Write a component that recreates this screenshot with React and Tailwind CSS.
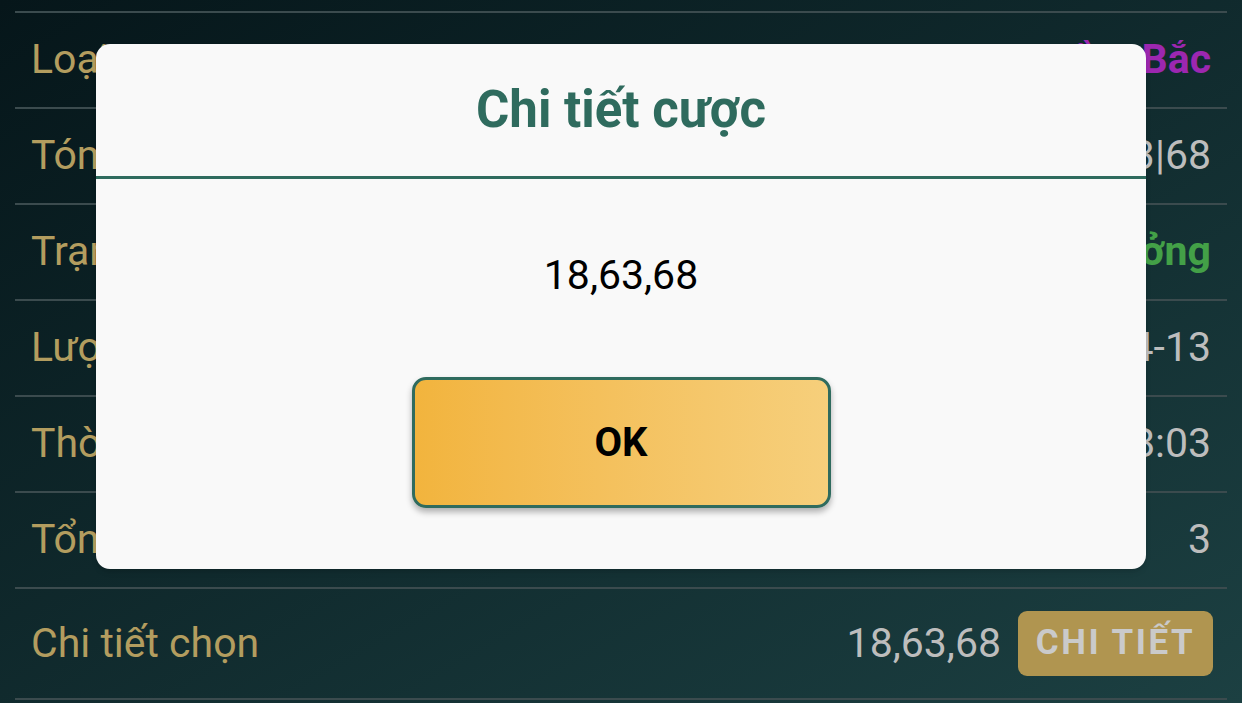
import React from 'react';

const rows = [
  { label: 'Loại', value: 'Miền Bắc', tone: 'purple' },
  { label: 'Tóm tắt', value: '18|63|68', tone: 'gray' },
  { label: 'Trạng thái', value: 'Trúng thưởng', tone: 'green' },
  { label: 'Lượt xổ', value: '2024-04-13', tone: 'gray' },
  { label: 'Thời gian', value: '2024-04-13 18:28:03', tone: 'gray' },
  { label: 'Tổng số', value: '3', tone: 'gray' },
];

function valueClass(tone) {
  switch (tone) {
    case 'purple': return 'text-[#9c27b0] font-bold';
    case 'green': return 'text-[#43a047] font-bold';
    default: return 'text-[#bdbdbd]';
  }
}

export default function App() {
  return (
    <div
      className="relative w-[1242px] h-[703px] overflow-hidden bg-gradient-to-br from-[#06161a] to-[#1c4042]"
      style={{ fontFamily: 'Roboto, "Noto Sans", sans-serif' }}
    >
      {/* Detail list */}
      <div className="px-[15px] pt-[11px]">
        {rows.map((r) => (
          <div
            key={r.label}
            className="h-[96px] border-t-2 border-[#3b4b4e] flex items-center justify-between px-4 text-[41px]"
          >
            <span className="text-[#b39d5f]">{r.label}</span>
            <span className={valueClass(r.tone)}>{r.value}</span>
          </div>
        ))}
        <div className="h-[113px] border-t-2 border-b-2 border-[#3b4b4e] flex items-center justify-between pl-4 pr-[14px] text-[41px]">
          <span className="text-[#b39d5f]">Chi tiết chọn</span>
          <div className="flex items-center gap-[17px]">
            <span className="text-[#bdbdbd]">18,63,68</span>
            <button className="h-[65px] w-[195px] rounded-[9px] bg-[#b09550] text-[#cacaca] font-bold text-[35px] tracking-[2.5px]">
              CHI TIẾT
            </button>
          </div>
        </div>
      </div>

      {/* Dialog */}
      <div className="absolute left-[96px] top-[44px] w-[1050px] h-[525px] rounded-[14px] bg-[#f9f9f9] shadow-md overflow-hidden flex flex-col">
        <div className="h-[132px] flex items-center justify-center">
          <h2 className="text-[51px] font-bold text-[#2f6b5e]">Chi tiết cược</h2>
        </div>
        <div className="h-[3px] bg-[#2f6b5e]" />
        <div className="flex flex-col items-center pt-[72px]">
          <p className="text-[41px] leading-[48px] text-black">18,63,68</p>
          <button className="mt-[78px] w-[419px] h-[131px] rounded-[14px] border-[3px] border-[#2f6b5e] bg-gradient-to-r from-[#f2b43d] to-[#f6cf7b] shadow-[0_4px_6px_rgba(0,0,0,0.3)] text-[40px] font-bold text-black">
            OK
          </button>
        </div>
      </div>
    </div>
  );
}
